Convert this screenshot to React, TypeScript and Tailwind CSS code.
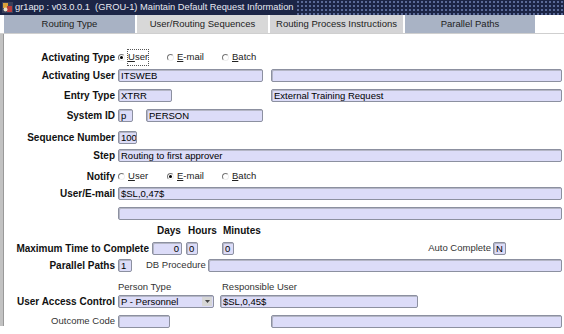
import React from 'react';

// Classic forms look: lavender fields, bold right-aligned prompts
const Field = ({ value = '', className = '', right = false }: { value?: string; className?: string; right?: boolean }) => (
  <div
    className={`h-[13px] shrink-0 rounded-[2px] border border-[#8c90a0] bg-[#dcdcf8] px-[2px] text-[9.5px] leading-[11px] text-black whitespace-nowrap overflow-hidden shadow-[inset_1px_1px_0_#b4b6c6] ${right ? 'text-right' : ''} ${className}`}
  >
    {value}
  </div>
);

const Label = ({ children, bold = true, w = 'w-[114px]' }: { children: React.ReactNode; bold?: boolean; w?: string }) => (
  <div className={`${w} shrink-0 flex justify-end pr-[3px] whitespace-nowrap ${bold ? 'font-bold text-[10px] text-[#111]' : 'text-[9.5px] text-[#333]'}`}>
    {children}
  </div>
);

const Radio = ({ on, letter, rest, w, focus = false }: { on: boolean; letter: string; rest: string; w: string; focus?: boolean }) => (
  <div className={`${w} shrink-0 flex items-center text-[9.5px] text-[#222]`}>
    <span className="relative w-[7px] h-[7px] rounded-full border border-t-[#777] border-l-[#777] border-r-[#eee] border-b-[#eee] bg-white">
      {on && <span className="absolute left-[1px] top-[1px] w-[3px] h-[3px] rounded-full bg-black" />}
    </span>
    <span className={`ml-[3px] ${focus ? 'outline outline-1 outline-dotted outline-[#555]' : ''}`}>
      <span className="underline">{letter}</span>
      {rest}
    </span>
  </div>
);

const tabs = [
  { name: 'Routing Type', w: 'w-[131px]', bg: 'bg-[#a8b2c4]' },
  { name: 'User/Routing Sequences', w: 'w-[131px]', bg: 'bg-[#d8d8d8]' },
  { name: 'Routing Process Instructions', w: 'w-[133px]', bg: 'bg-[#d4d4d6]' },
  { name: 'Parallel Paths', w: 'w-[130px]', bg: 'bg-[#a9b3c5]' },
];

export default function App() {
  return (
    <div className="w-[564px] h-[334px] bg-white overflow-hidden font-['Liberation_Sans',Arial,sans-serif] flex flex-col">
      {/* TITLE BAR */}
      <div className="h-[15px] shrink-0 flex bg-[#1c2546] bg-[radial-gradient(circle,#5a6a98_0.9px,transparent_1.1px)] bg-[length:4px_4px]">
        <div className="flex items-center bg-[#1c2546] pl-[2px] pr-[2px]">
          <svg width="11" height="11" viewBox="0 0 11 11">
            <rect x="0" y="0" width="11" height="11" fill="#3a3f5a" />
            <rect x="1" y="1" width="5" height="5" fill="#d9a23a" />
            <rect x="5" y="4" width="5" height="6" fill="#b83c3c" />
            <circle cx="3.5" cy="7.5" r="2" fill="#e8e0c8" />
          </svg>
          <span className="ml-[2px] text-[9.3px] text-[#e8eaf2] whitespace-nowrap">
            gr1app : v03.0.0.1&nbsp; (GROU-1) Maintain Default Request Information
          </span>
        </div>
      </div>

      {/* TABS */}
      <div className="h-[18px] shrink-0 flex pl-[4px] gap-[2px] bg-white">
        {tabs.map((t) => (
          <div key={t.name} className={`${t.w} ${t.bg} flex items-center justify-center text-[9.5px] text-[#222] whitespace-nowrap`}>
            {t.name}
          </div>
        ))}
      </div>

      {/* FORM */}
      <div className="flex-1 flex border-t border-[#cfcfcf]">
        <div className="w-[4px] shrink-0 bg-[#c2c2c2] border-r border-[#999] mb-[8px]" />
        <div className="flex-1 flex flex-col pr-[2px] pt-[17px]">
          <div className="h-[13px] flex items-center">
            <Label>Activating Type</Label>
            <Radio on letter="U" rest="ser" w="w-[49px]" focus />
            <Radio on={false} letter="E" rest="-mail" w="w-[55px]" />
            <Radio on={false} letter="B" rest="atch" w="w-[50px]" />
          </div>

          <div className="mt-[5px] h-[13px] flex items-center">
            <Label>Activating User</Label>
            <Field value="ITSWEB" className="w-[145px]" />
            <Field className="ml-[8px] flex-1" />
          </div>

          <div className="mt-[7px] h-[13px] flex items-center">
            <Label>Entry Type</Label>
            <Field value="XTRR" className="w-[54px]" />
            <Field value="External Training Request" className="ml-[99px] flex-1" />
          </div>

          <div className="mt-[7px] h-[13px] flex items-center">
            <Label>System ID</Label>
            <Field value="p" className="w-[15px]" />
            <Field value="PERSON" className="ml-[13px] w-[117px]" />
          </div>

          <div className="mt-[9px] h-[13px] flex items-center">
            <Label>Sequence Number</Label>
            <Field value="100" className="w-[19px]" />
          </div>

          <div className="mt-[5px] h-[13px] flex items-center">
            <Label>Step</Label>
            <Field value="Routing to first approver" className="flex-1" />
          </div>

          <div className="mt-[8px] h-[13px] flex items-center">
            <Label>Notify</Label>
            <Radio on={false} letter="U" rest="ser" w="w-[49px]" />
            <Radio on letter="E" rest="-mail" w="w-[55px]" />
            <Radio on={false} letter="B" rest="atch" w="w-[50px]" />
          </div>

          <div className="mt-[4px] h-[13px] flex items-center">
            <Label>User/E-mail</Label>
            <Field value="$SL,0,47$" className="flex-1" />
          </div>

          <div className="mt-[7px] h-[13px] flex items-center">
            <div className="w-[114px] shrink-0" />
            <Field className="flex-1" />
          </div>

          <div className="mt-[4px] h-[13px] flex items-center pl-[153px] font-bold text-[10px] text-[#111]">
            <span className="w-[31px]">Days</span>
            <span className="w-[35px]">Hours</span>
            <span>Minutes</span>
          </div>

          <div className="mt-[5px] h-[13px] flex items-center">
            <Label w="w-[148px]">Maximum Time to Complete</Label>
            <Field value="0" right className="w-[30px]" />
            <Field value="0" className="ml-[4px] w-[12px]" />
            <Field value="0" className="ml-[24px] w-[12px]" />
            <div className="flex-1" />
            <span className="text-[9.5px] text-[#333] mr-[2px]">Auto Complete</span>
            <Field value="N" className="w-[13px] mr-[56px]" />
          </div>

          <div className="mt-[4px] h-[13px] flex items-center">
            <Label>Parallel Paths</Label>
            <Field value="1" className="w-[14px]" />
            <span className="ml-[14px] mr-[2px] text-[9.5px] text-[#333]">DB Procedure</span>
            <Field className="flex-1" />
          </div>

          <div className="mt-[9px] h-[13px] flex items-center pl-[114px] text-[9.5px] text-[#333]">
            <span className="w-[104px]">Person Type</span>
            <span>Responsible User</span>
          </div>

          <div className="mt-[1px] h-[13px] flex items-center">
            <Label>User Access Control</Label>
            <div className="w-[96px] h-[13px] shrink-0 flex rounded-[2px] border border-[#8c90a0] bg-[#dcdcf8] text-[9.5px] leading-[11px] text-black shadow-[inset_1px_1px_0_#b4b6c6]">
              <span className="flex-1 pl-[2px] whitespace-nowrap">P - Personnel</span>
              <span className="w-[10px] m-[1px] bg-[#d6d6d6] flex items-center justify-center">
                <svg width="5" height="3" viewBox="0 0 5 3"><path d="M0 0h5L2.5 3z" fill="#444" /></svg>
              </span>
            </div>
            <Field value="$SL,0,45$" className="ml-[6px] w-[198px]" />
          </div>

          <div className="mt-[7px] h-[13px] flex items-center">
            <Label bold={false}>Outcome Code</Label>
            <Field className="w-[52px]" />
            <Field className="ml-[101px] flex-1" />
          </div>
        </div>
      </div>
    </div>
  );
}
